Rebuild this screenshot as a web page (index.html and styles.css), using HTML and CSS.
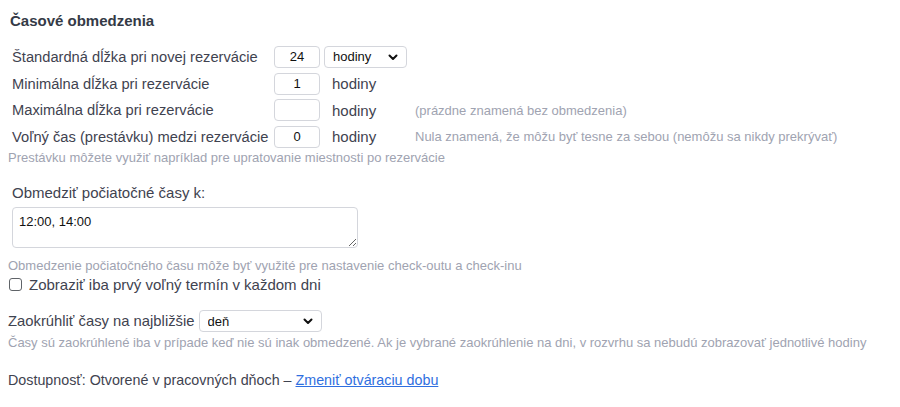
FILE: index.html
```html
<!DOCTYPE html>
<html lang="sk">
<head>
<meta charset="utf-8">
<title>Časové obmedzenia</title>
<link rel="stylesheet" href="styles.css">
</head>
<body>
<div class="page">
  <h2 class="title">Časové obmedzenia</h2>

  <div class="limits">
    <label class="lbl">Štandardná dĺžka pri novej rezervácie</label>
    <div class="cell"><input class="num" type="text" value="24"></div>
    <div class="cell">
      <span class="sel sel-units">
        <select><option>hodiny</option></select>
        <svg class="chev" width="10" height="7" viewBox="0 0 10 7"><path d="M1.5 1.5 L5 5 L8.5 1.5" fill="none" stroke="#111" stroke-width="2" stroke-linecap="round" stroke-linejoin="round"/></svg>
      </span>
    </div>
    <div class="cell"></div>

    <label class="lbl">Minimálna dĺžka pri rezervácie</label>
    <div class="cell"><input class="num" type="text" value="1"></div>
    <div class="cell unit">hodiny</div>
    <div class="cell"></div>

    <label class="lbl">Maximálna dĺžka pri rezervácie</label>
    <div class="cell"><input class="num" type="text" value=""></div>
    <div class="cell unit">hodiny</div>
    <div class="cell hint">(prázdne znamená bez obmedzenia)</div>

    <label class="lbl">Voľný čas (prestávku) medzi rezervácie</label>
    <div class="cell"><input class="num" type="text" value="0"></div>
    <div class="cell unit">hodiny</div>
    <div class="cell hint">Nula znamená, že môžu byť tesne za sebou (nemôžu sa nikdy prekrývať)</div>
  </div>
  <p class="note">Prestávku môžete využiť napríklad pre upratovanie miestnosti po rezervácie</p>

  <div class="starts">
    <label class="start-label">Obmedziť počiatočné časy k:</label>
    <textarea class="times">12:00, 14:00</textarea>
  </div>
  <p class="note note-start">Obmedzenie počiatočného času môže byť využité pre nastavenie check-outu a check-inu</p>

  <label class="check">
    <input type="checkbox" class="box">
    <span>Zobraziť iba prvý voľný termín v každom dni</span>
  </label>

  <div class="round">
    <span>Zaokrúhliť časy na najbližšie</span>
    <span class="sel sel-round">
      <select><option>deň</option></select>
      <svg class="chev" width="10" height="7" viewBox="0 0 10 7"><path d="M1.5 1.5 L5 5 L8.5 1.5" fill="none" stroke="#111" stroke-width="2" stroke-linecap="round" stroke-linejoin="round"/></svg>
    </span>
  </div>
  <p class="note note-round">Časy sú zaokrúhlené iba v prípade keď nie sú inak obmedzené. Ak je vybrané zaokrúhlenie na dni, v rozvrhu sa nebudú zobrazovať jednotlivé hodiny</p>

  <p class="avail">Dostupnosť: Otvorené v pracovných dňoch – <a href="#" class="link">Zmeniť otváraciu dobu</a></p>
</div>
</body>
</html>
```

FILE: styles.css
```css
* { box-sizing: border-box; }

html, body {
  margin: 0;
  padding: 0;
  background: #ffffff;
}

body {
  font-family: "Liberation Sans", Arial, Helvetica, sans-serif;
  color: #3f4350;
}

.page {
  padding: 0 8px;
}

.title {
  margin: 0 0 0 2px;
  padding-top: 11px;
  font-size: 15px;
  line-height: 20px;
  font-weight: bold;
  color: #343a46;
}

.limits {
  display: grid;
  grid-template-columns: 262px 50px 91px auto;
  grid-auto-rows: 26.7px;
  margin-top: 12.5px;
  padding-left: 4px;
}

.lbl {
  display: flex;
  align-items: center;
  font-size: 14.7px;
  white-space: nowrap;
}

.cell {
  display: flex;
  align-items: center;
  white-space: nowrap;
}

.unit {
  font-size: 15px;
  padding-left: 8px;
}

.hint {
  font-size: 13px;
  color: #a0a3b1;
}

.num {
  width: 46px;
  height: 22px;
  border: 1px solid #d4d6dc;
  border-radius: 4px;
  background: #fff;
  text-align: center;
  font-family: "Liberation Sans", Arial, sans-serif;
  font-size: 13px;
  color: #111;
  padding: 0;
  outline: none;
}

.sel {
  position: relative;
  display: inline-block;
  height: 22px;
}

.sel select {
  -webkit-appearance: none;
  appearance: none;
  height: 22px;
  border: 1px solid #d4d6dc;
  border-radius: 4px;
  background: #fff;
  font-family: "Liberation Sans", Arial, sans-serif;
  font-size: 13px;
  color: #111;
  padding: 0 0 0 8px;
  margin: 0;
  outline: none;
}

.sel-units select { width: 83px; }
.sel-round select { width: 123px; }

.chev {
  position: absolute;
  right: 9px;
  top: 8px;
  pointer-events: none;
}

.note {
  margin: 0;
  font-size: 13px;
  line-height: 16px;
  color: #a0a3b1;
}

.starts {
  margin-top: 17px;
  padding-left: 4px;
}

.start-label {
  display: block;
  font-size: 15px;
  line-height: 20px;
}

.times {
  display: block;
  width: 346px;
  height: 41px;
  margin-top: 4px;
  border: 1px solid #d4d6dc;
  border-radius: 4px;
  padding: 6px 6px;
  font-family: "Liberation Sans", Arial, sans-serif;
  font-size: 13px;
  line-height: 16px;
  color: #111;
  resize: vertical;
  outline: none;
}

.note-start {
  margin-top: 10px;
}

.check {
  display: flex;
  align-items: center;
  height: 20px;
  font-size: 15px;
  gap: 7px;
  padding-left: 1px;
}

.box {
  -webkit-appearance: none;
  appearance: none;
  width: 13px;
  height: 13px;
  margin: 0;
  border: 1px solid #5f6368;
  border-radius: 3px;
  background: #fff;
}

.round {
  display: flex;
  align-items: center;
  gap: 4px;
  margin-top: 16px;
  height: 22px;
  font-size: 14.8px;
}

.note-round {
  margin-top: 3px;
}

.avail {
  margin: 19px 0 0;
  font-size: 14.3px;
  line-height: 20px;
}

.link {
  color: #2f6fe0;
  text-decoration: underline;
}
```
